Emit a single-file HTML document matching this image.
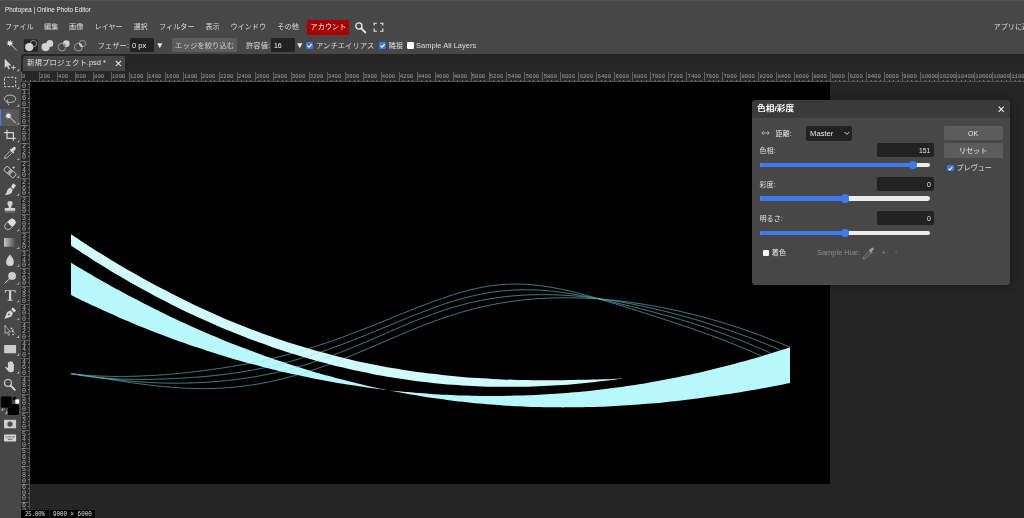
<!DOCTYPE html><html lang="ja"><head><meta charset="utf-8"><title>Photopea | Online Photo Editor</title><style>
html,body{margin:0;padding:0;}
body{width:1024px;height:518px;overflow:hidden;background:#474747;position:relative;font-family:"Liberation Sans", "Noto Sans CJK JP", sans-serif;color:#dcdcdc;font-size:7.1px;line-height:1;}
div,span,i,b,svg{position:absolute;box-sizing:border-box;}
i,b{font-style:normal;font-weight:normal;}
.t{white-space:nowrap;}
.root{left:0;top:0;width:1024px;height:518px;will-change:transform;}
.topline{left:0;top:0;width:1024px;height:1px;background:#525252;}
.title{top:5.9px;font-size:7.6px;color:#f2f2f2;}
.menu{top:23.6px;font-size:7.15px;color:#dcdcdc;}
.acct{left:307px;top:19.6px;width:42.4px;height:15.3px;background:#a80000;border-radius:1.6px;}

.opt{top:42.2px;font-size:7.35px;color:#dcdcdc;}
.inp{background:#222222;border-radius:1.5px;}
.btn{background:#5c5c5c;border-radius:1.5px;}
.cb{width:7.2px;height:7.2px;border-radius:1.2px;}
.cb.on{background:#3b78e8;}
.cb.off{background:#fff;}
.tabbar{left:21px;top:53.6px;width:1003px;height:18px;background:#252525;border-top-left-radius:3px;}
.tab{left:23px;top:55.8px;width:102px;height:15.4px;background:#474747;border-radius:2px 2px 0 0;}
.work{left:21px;top:71px;width:1003px;height:447px;background:#252525;}
.canvas{left:30px;top:82px;width:800px;height:402.3px;background:#000;}
.art{left:0;top:0;}
.hr{left:21px;top:71px;width:1003px;height:11px;background:#272727;overflow:hidden;border-bottom:0.7px solid #505050;}
.hr i.mj{top:1px;width:0.7px;height:10px;background:#5e5e5e;margin-left:-21px;}.hr i.mn{top:9px;width:0.7px;height:1.4px;background:#767676;margin-left:-21px;}
.hr b{top:2.9px;font-family:"Liberation Mono",monospace;font-size:5.6px;color:#a2a2a2;margin-left:-21px;}
.vr{left:21px;top:82px;width:9px;height:436px;background:#272727;overflow:hidden;border-right:0.7px solid #505050;}
.vr i.mj{left:0;width:9px;height:0.7px;background:#5e5e5e;margin-top:-82px;}.vr i.mn{left:7px;width:1.6px;height:0.7px;background:#767676;margin-top:-82px;}
.vr b{left:1.1px;font-family:"Liberation Mono",monospace;font-size:6.7px;color:#acacac;margin-top:-82px;}
.status{top:509.5px;height:8.5px;background:#000;color:#e0e0e0;font-family:"Liberation Mono",monospace;font-size:6.6px;}
.dlg{left:752px;top:99.6px;width:258px;height:185.4px;background:#474747;border-radius:3.5px;box-shadow:0 0.5px 9px 1px rgba(0,0,0,0.32);overflow:hidden;}
.dlg .hd{left:0;top:0;width:258px;height:18.2px;background:#3a3a3a;}

.lab{font-size:7.1px;color:#e0e0e0;}
.num{left:125.3px;width:56.5px;height:14.4px;background:#222222;border-radius:2px;}

.trk{left:8px;width:170.4px;height:4.7px;border-radius:2.4px;background:#ececec;}
.trk i{left:0;top:0;height:4.7px;border-radius:2.4px;background:#3d7af0;}
.knob{width:8.6px;height:8.6px;border-radius:50%;background:#3d7af0;}
</style></head><body><div class="root"><div class="topline"></div><span id="m1" class="t title" style="left:5.00px;transform:scaleX(0.8215);transform-origin:0 50%;">Photopea | Online Photo Editor</span><span id="m2" class="t menu" style="left:5.00px;">ファイル</span><span id="m3" class="t menu" style="left:44.00px;">編集</span><span id="m4" class="t menu" style="left:69.00px;">画像</span><span id="m5" class="t menu" style="left:94.40px;">レイヤー</span><span id="m6" class="t menu" style="left:133.40px;">選択</span><span id="m7" class="t menu" style="left:159.00px;">フィルター</span><span id="m8" class="t menu" style="left:205.40px;">表示</span><span id="m9" class="t menu" style="left:230.40px;">ウインドウ</span><span id="m10" class="t menu" style="left:277.50px;">その他</span><div class="acct"><span id="m11" class="t " style="left:3.60px;top:4.1px;font-size:7.15px;color:#fff;">アカウント</span></div><span id="m12" class="t menu" style="left:993.50px;">アプリに追加</span><svg style="left:354px;top:21px" width="14" height="14" viewBox="0 0 14 14"><circle cx="4.9" cy="5" r="3.1" fill="none" stroke="#e8e8e8" stroke-width="1.3"/><path d="M7.3 7.4L11.3 11.4" stroke="#e8e8e8" stroke-width="1.9" stroke-linecap="round"/></svg><svg style="left:373px;top:22px" width="12" height="11" viewBox="0 0 12 11"><path d="M1.2 3.6V1.2H3.9M7.1 1.2H9.8V3.6M9.8 6.6V9.2H7.1M3.9 9.2H1.2V6.6" fill="none" stroke="#e8e8e8" stroke-width="1.15"/></svg><svg style="left:0;top:34px" width="100" height="22" viewBox="0 34 100 22"><path d="M13.92 44.11L11.14 44.14L12.17 46.72L10.19 44.77L9.09 47.32L9.06 44.54L6.48 45.57L8.43 43.59L5.88 42.49L8.66 42.46L7.63 39.88L9.61 41.83L10.71 39.28L10.74 42.06L13.32 41.03L11.37 43.01Z" fill="#e0e0e0"/><circle cx="9.9" cy="43.3" r="1.9" fill="#e6e6e6"/><path d="M11.3 44.8L16.9 50.5" stroke="#d6d6d6" stroke-width="0.9"/><rect x="23.9" y="39.2" width="14.1" height="12.7" rx="1.4" fill="#252525"/><circle cx="33.4" cy="43.6" r="3.2" fill="none" stroke="#d8d8d8" stroke-width="0.6"/><circle cx="29.2" cy="47.1" r="4.1" fill="#d2d2d2"/><circle cx="49.8" cy="43.6" r="3.5" fill="#d2d2d2"/><circle cx="45.6" cy="47.1" r="4.1" fill="#d2d2d2"/><defs><clipPath id="c3"><circle cx="62" cy="47.1" r="4.1"/></clipPath><clipPath id="c4"><circle cx="78.3" cy="47.1" r="4.1"/></clipPath></defs><circle cx="66.3" cy="43.6" r="3.4" fill="#d2d2d2"/><circle cx="62" cy="47.1" r="4.1" fill="#474747"/><circle cx="66.3" cy="43.6" r="3.1" fill="none" stroke="#d2d2d2" stroke-width="0.55" clip-path="url(#c3)"/><circle cx="62" cy="47.1" r="3.9" fill="none" stroke="#d2d2d2" stroke-width="0.6"/><circle cx="82.5" cy="43.6" r="3.4" fill="#d2d2d2" clip-path="url(#c4)"/><circle cx="82.5" cy="43.6" r="3.2" fill="none" stroke="#d2d2d2" stroke-width="0.6"/><circle cx="78.3" cy="47.1" r="3.9" fill="none" stroke="#d2d2d2" stroke-width="0.6"/></svg><span id="m13" class="t opt" style="left:97.50px;">フェザー:</span><div class="inp" style="left:130.4px;top:38px;width:23.6px;height:13.8px"><span id="m14" class="t " style="left:2.10px;top:4.7px;font-size:7.1px;color:#eee;transform:scaleX(1.0729);transform-origin:0 50%;">0 px</span></div><svg style="left:156.6px;top:43px" width="6" height="6" viewBox="0 0 6 6"><path d="M0.2 0.3H5.4L2.8 5.2Z" fill="#e8e8e8"/></svg><div class="btn" style="left:172.3px;top:38px;width:64.6px;height:14.4px"><span id="m15" class="t " style="left:2.80px;top:3.9px;font-size:7.4px;color:#cfcfcf;">エッジを絞り込む</span></div><span id="m16" class="t opt" style="left:246.00px;">許容値:</span><div class="inp" style="left:271px;top:38px;width:23.8px;height:13.8px"><span id="m17" class="t " style="left:2.50px;top:4.7px;font-size:7.1px;color:#eee;transform:scaleX(0.9822);transform-origin:0 50%;">16</span></div><svg style="left:296.6px;top:43px" width="6" height="6" viewBox="0 0 6 6"><path d="M0.2 0.3H5.4L2.8 5.2Z" fill="#e8e8e8"/></svg><div class="cb on" style="left:306.30px;top:42.10px;width:7.20px;height:7.20px"><svg style="left:0;top:0" width="7.20" height="7.20" viewBox="0 0 10 10"><path d="M2.2 5.2L4.2 7.2L7.9 2.9" fill="none" stroke="#fff" stroke-width="1.5"/></svg></div><span id="m18" class="t opt" style="left:316.00px;">アンチエイリアス</span><div class="cb on" style="left:378.80px;top:42.10px;width:7.20px;height:7.20px"><svg style="left:0;top:0" width="7.20" height="7.20" viewBox="0 0 10 10"><path d="M2.2 5.2L4.2 7.2L7.9 2.9" fill="none" stroke="#fff" stroke-width="1.5"/></svg></div><span id="m19" class="t opt" style="left:388.50px;">隣接</span><div class="cb off" style="left:406.50px;top:42.10px;width:7.20px;height:7.20px"></div><span id="m20" class="t opt" style="left:416.00px;transform:scaleX(1.0250);transform-origin:0 50%;">Sample All Layers</span><div class="tabbar"></div><div class="work"></div><div class="tab"><span id="m21" class="t " style="left:4.00px;top:4.1px;font-size:7.1px;color:#e0e0e0;transform:scaleX(1.0549);transform-origin:0 50%;">新規プロジェクト.psd *</span><svg style="left:91.5px;top:4.6px" width="7" height="7" viewBox="0 0 7 7"><path d="M0.8 0.8L6 6M6 0.8L0.8 6" stroke="#f0f0f0" stroke-width="1.05"/></svg></div><div class="canvas"></div><svg class="art" width="1024" height="518" viewBox="0 0 1024 518"><g fill="none" stroke="#6fc3cb" stroke-width="0.55"><path d="M71.25 373.75C72.92 373.93 77.92 374.50 81.25 374.81C84.58 375.12 87.92 375.37 91.25 375.59C94.58 375.80 97.92 375.97 101.25 376.11C104.58 376.24 107.92 376.33 111.25 376.39C114.58 376.45 117.92 376.46 121.25 376.45C124.58 376.44 127.92 376.40 131.25 376.32C134.58 376.25 137.92 376.14 141.25 376.01C144.58 375.88 147.92 375.72 151.25 375.53C154.58 375.35 157.92 375.13 161.25 374.90C164.58 374.66 167.92 374.40 171.25 374.11C174.58 373.83 177.92 373.52 181.25 373.19C184.58 372.86 187.92 372.51 191.25 372.13C194.58 371.76 197.92 371.36 201.25 370.94C204.58 370.52 207.92 370.08 211.25 369.62C214.58 369.16 217.92 368.67 221.25 368.16C224.58 367.65 227.92 367.12 231.25 366.57C234.58 366.01 237.92 365.43 241.25 364.83C244.58 364.22 247.92 363.59 251.25 362.94C254.58 362.28 257.92 361.59 261.25 360.88C264.58 360.17 267.92 359.42 271.25 358.65C274.58 357.87 277.92 357.07 281.25 356.23C284.58 355.39 287.92 354.52 291.25 353.61C294.58 352.71 297.92 351.77 301.25 350.80C304.58 349.83 307.92 348.82 311.25 347.79C314.58 346.75 317.92 345.68 321.25 344.59C324.58 343.49 327.92 342.36 331.25 341.20C334.58 340.04 337.92 338.86 341.25 337.65C344.58 336.44 347.92 335.20 351.25 333.94C354.58 332.68 357.92 331.40 361.25 330.10C364.58 328.81 367.92 327.49 371.25 326.16C374.58 324.84 377.92 323.50 381.25 322.15C384.58 320.81 387.92 319.45 391.25 318.09C394.58 316.74 397.92 315.38 401.25 314.04C404.58 312.69 407.92 311.34 411.25 310.02C414.58 308.69 417.92 307.37 421.25 306.09C424.58 304.80 427.92 303.52 431.25 302.29C434.58 301.06 437.92 299.85 441.25 298.69C444.58 297.53 447.92 296.40 451.25 295.33C454.58 294.26 457.92 293.24 461.25 292.29C464.58 291.34 467.92 290.44 471.25 289.62C474.58 288.81 477.92 288.06 481.25 287.41C484.58 286.76 487.92 286.19 491.25 285.72C494.58 285.25 497.92 284.87 501.25 284.59C504.58 284.31 507.92 284.13 511.25 284.05C514.58 283.96 517.92 283.98 521.25 284.08C524.58 284.18 527.92 284.38 531.25 284.65C534.58 284.93 537.92 285.29 541.25 285.73C544.58 286.16 547.92 286.68 551.25 287.25C554.58 287.83 557.92 288.48 561.25 289.17C564.58 289.87 567.92 290.63 571.25 291.42C574.58 292.22 577.92 293.07 581.25 293.94C584.58 294.81 587.92 295.73 591.25 296.66C594.58 297.59 597.92 298.56 601.25 299.54C604.58 300.52 607.92 301.53 611.25 302.54C614.58 303.55 617.92 304.59 621.25 305.62C624.58 306.66 627.92 307.71 631.25 308.76C634.58 309.82 637.92 310.88 641.25 311.95C644.58 313.01 647.92 314.09 651.25 315.16C654.58 316.24 657.92 317.32 661.25 318.41C664.58 319.49 667.92 320.58 671.25 321.68C674.58 322.79 677.92 323.89 681.25 325.01C684.58 326.13 687.92 327.26 691.25 328.41C694.58 329.56 697.92 330.72 701.25 331.90C704.58 333.09 707.92 334.28 711.25 335.51C714.58 336.74 717.92 337.98 721.25 339.26C724.58 340.53 727.92 341.83 731.25 343.16C734.58 344.49 737.92 345.85 741.25 347.24C744.58 348.63 747.92 350.05 751.25 351.51C754.58 352.97 759.58 355.25 761.25 356.00"/><path d="M71.25 373.75C72.91 374.04 77.91 374.98 81.24 375.50C84.56 376.02 87.89 376.46 91.22 376.85C94.55 377.25 97.88 377.58 101.21 377.87C104.54 378.15 107.86 378.39 111.19 378.59C114.52 378.78 117.85 378.94 121.18 379.06C124.51 379.18 127.84 379.26 131.16 379.31C134.49 379.37 137.82 379.39 141.15 379.38C144.48 379.38 147.81 379.35 151.14 379.30C154.46 379.24 157.79 379.16 161.12 379.06C164.45 378.96 167.78 378.84 171.11 378.70C174.44 378.55 177.76 378.39 181.09 378.20C184.42 378.02 187.75 377.81 191.08 377.58C194.41 377.35 197.74 377.10 201.06 376.82C204.39 376.54 207.72 376.24 211.05 375.91C214.38 375.58 217.71 375.22 221.04 374.83C224.36 374.44 227.69 374.02 231.02 373.56C234.35 373.10 237.68 372.61 241.01 372.08C244.34 371.55 247.66 370.99 250.99 370.39C254.32 369.78 257.65 369.14 260.98 368.46C264.31 367.78 267.64 367.06 270.96 366.30C274.29 365.54 277.62 364.74 280.95 363.90C284.28 363.07 287.61 362.19 290.94 361.27C294.26 360.35 297.59 359.40 300.92 358.41C304.25 357.41 307.58 356.38 310.91 355.32C314.24 354.25 317.56 353.15 320.89 352.02C324.22 350.89 327.55 349.72 330.88 348.53C334.21 347.33 337.54 346.11 340.86 344.86C344.19 343.61 347.52 342.33 350.85 341.04C354.18 339.74 357.51 338.42 360.84 337.09C364.16 335.76 367.49 334.40 370.82 333.04C374.15 331.68 377.48 330.31 380.81 328.93C384.14 327.56 387.46 326.17 390.79 324.80C394.12 323.42 397.45 322.04 400.78 320.68C404.11 319.31 407.44 317.95 410.76 316.62C414.09 315.28 417.42 313.95 420.75 312.66C424.08 311.37 427.41 310.09 430.74 308.86C434.06 307.63 437.39 306.43 440.72 305.28C444.05 304.13 447.38 303.02 450.71 301.97C454.04 300.92 457.36 299.92 460.69 298.98C464.02 298.05 467.35 297.17 470.68 296.37C474.01 295.56 477.34 294.82 480.66 294.16C483.99 293.49 487.32 292.90 490.65 292.38C493.98 291.86 497.31 291.42 500.64 291.05C503.96 290.68 507.29 290.39 510.62 290.18C513.95 289.96 517.28 289.82 520.61 289.75C523.94 289.69 527.26 289.70 530.59 289.77C533.92 289.85 537.25 290.00 540.58 290.21C543.91 290.42 547.24 290.70 550.56 291.03C553.89 291.36 557.22 291.76 560.55 292.19C563.88 292.63 567.21 293.13 570.54 293.65C573.86 294.18 577.19 294.76 580.52 295.36C583.85 295.96 587.18 296.60 590.51 297.26C593.84 297.92 597.16 298.62 600.49 299.33C603.82 300.04 607.15 300.78 610.48 301.53C613.81 302.28 617.14 303.05 620.46 303.84C623.79 304.62 627.12 305.43 630.45 306.24C633.78 307.06 637.11 307.89 640.44 308.73C643.76 309.57 647.09 310.43 650.42 311.30C653.75 312.17 657.08 313.05 660.41 313.95C663.74 314.86 667.06 315.77 670.39 316.71C673.72 317.65 677.05 318.60 680.38 319.58C683.71 320.57 687.04 321.57 690.36 322.60C693.69 323.63 697.02 324.69 700.35 325.79C703.68 326.88 707.01 328.00 710.34 329.15C713.66 330.30 716.99 331.49 720.32 332.70C723.65 333.92 726.98 335.16 730.31 336.44C733.64 337.71 736.96 339.01 740.29 340.34C743.62 341.66 746.95 343.01 750.28 344.38C753.61 345.75 756.94 347.14 760.26 348.53C763.59 349.93 768.59 352.05 770.25 352.75"/><path d="M71.25 373.75C72.91 373.97 77.90 374.61 81.23 375.06C84.56 375.50 87.89 375.97 91.21 376.41C94.54 376.86 97.87 377.32 101.20 377.75C104.52 378.18 107.85 378.61 111.18 379.01C114.51 379.42 117.83 379.80 121.16 380.16C124.49 380.51 127.82 380.85 131.14 381.15C134.47 381.45 137.80 381.72 141.13 381.96C144.45 382.19 147.78 382.40 151.11 382.57C154.44 382.73 157.76 382.87 161.09 382.97C164.42 383.07 167.75 383.13 171.07 383.16C174.40 383.20 177.73 383.19 181.06 383.16C184.38 383.12 187.71 383.06 191.04 382.95C194.37 382.85 197.69 382.72 201.02 382.55C204.35 382.38 207.68 382.18 211.00 381.94C214.33 381.71 217.66 381.44 220.99 381.13C224.31 380.82 227.64 380.48 230.97 380.10C234.30 379.72 237.62 379.31 240.95 378.86C244.28 378.40 247.61 377.91 250.93 377.38C254.26 376.84 257.59 376.27 260.92 375.65C264.24 375.04 267.57 374.38 270.90 373.67C274.23 372.96 277.55 372.21 280.88 371.42C284.21 370.62 287.54 369.78 290.86 368.89C294.19 368.00 297.52 367.06 300.85 366.08C304.17 365.10 307.50 364.07 310.83 363.00C314.15 361.93 317.48 360.82 320.81 359.66C324.14 358.51 327.46 357.31 330.79 356.08C334.12 354.85 337.45 353.58 340.77 352.28C344.10 350.98 347.43 349.64 350.76 348.29C354.08 346.93 357.41 345.54 360.74 344.14C364.07 342.74 367.39 341.31 370.72 339.88C374.05 338.44 377.38 336.99 380.70 335.55C384.03 334.10 387.36 332.64 390.69 331.20C394.01 329.76 397.34 328.32 400.67 326.90C404.00 325.48 407.32 324.08 410.65 322.71C413.98 321.34 417.31 319.99 420.63 318.68C423.96 317.38 427.29 316.10 430.62 314.88C433.94 313.66 437.27 312.47 440.60 311.35C443.93 310.22 447.25 309.14 450.58 308.12C453.91 307.09 457.24 306.13 460.56 305.22C463.89 304.31 467.22 303.46 470.55 302.67C473.87 301.88 477.20 301.15 480.53 300.49C483.86 299.82 487.18 299.21 490.51 298.67C493.84 298.12 497.17 297.64 500.49 297.21C503.82 296.78 507.15 296.41 510.48 296.09C513.80 295.77 517.13 295.51 520.46 295.29C523.79 295.08 527.11 294.92 530.44 294.81C533.77 294.69 537.10 294.63 540.42 294.61C543.75 294.59 547.08 294.62 550.40 294.69C553.73 294.76 557.06 294.88 560.39 295.04C563.71 295.19 567.04 295.39 570.37 295.62C573.70 295.86 577.02 296.13 580.35 296.45C583.68 296.76 587.01 297.11 590.33 297.49C593.66 297.87 596.99 298.29 600.32 298.74C603.64 299.19 606.97 299.68 610.30 300.19C613.63 300.71 616.95 301.26 620.28 301.84C623.61 302.42 626.94 303.03 630.26 303.66C633.59 304.30 636.92 304.97 640.25 305.66C643.57 306.36 646.90 307.08 650.23 307.83C653.56 308.58 656.88 309.35 660.21 310.16C663.54 310.96 666.87 311.79 670.19 312.64C673.52 313.49 676.85 314.37 680.18 315.28C683.50 316.18 686.83 317.11 690.16 318.06C693.49 319.01 696.81 319.99 700.14 320.99C703.47 321.99 706.80 323.02 710.12 324.07C713.45 325.12 716.78 326.19 720.11 327.29C723.43 328.39 726.76 329.51 730.09 330.66C733.42 331.81 736.74 332.98 740.07 334.17C743.40 335.37 746.73 336.59 750.05 337.84C753.38 339.08 756.71 340.35 760.04 341.65C763.36 342.95 766.69 344.27 770.02 345.62C773.35 346.97 778.34 349.06 780.00 349.75"/><path d="M71.25 373.75C72.91 373.97 77.91 374.60 81.23 375.05C84.56 375.51 87.89 376.00 91.22 376.49C94.54 376.98 97.87 377.49 101.20 378.01C104.53 378.52 107.85 379.04 111.18 379.56C114.51 380.08 117.84 380.60 121.16 381.10C124.49 381.61 127.82 382.11 131.15 382.59C134.47 383.07 137.80 383.54 141.13 383.99C144.46 384.43 147.78 384.86 151.11 385.26C154.44 385.65 157.77 386.03 161.09 386.37C164.42 386.70 167.75 387.01 171.08 387.28C174.40 387.55 177.73 387.79 181.06 387.98C184.39 388.17 187.71 388.33 191.04 388.44C194.37 388.55 197.70 388.61 201.02 388.63C204.35 388.65 207.68 388.62 211.01 388.54C214.33 388.47 217.66 388.34 220.99 388.16C224.32 387.98 227.64 387.75 230.97 387.47C234.30 387.19 237.63 386.85 240.95 386.46C244.28 386.07 247.61 385.63 250.94 385.14C254.27 384.64 257.59 384.09 260.92 383.49C264.25 382.89 267.58 382.23 270.90 381.52C274.23 380.81 277.56 380.05 280.89 379.24C284.21 378.43 287.54 377.57 290.87 376.66C294.20 375.75 297.52 374.79 300.85 373.79C304.18 372.79 307.51 371.74 310.83 370.65C314.16 369.56 317.49 368.42 320.82 367.25C324.14 366.08 327.47 364.87 330.80 363.63C334.13 362.39 337.45 361.11 340.78 359.81C344.11 358.50 347.44 357.17 350.76 355.81C354.09 354.46 357.42 353.08 360.75 351.68C364.07 350.29 367.40 348.87 370.73 347.46C374.06 346.04 377.38 344.60 380.71 343.17C384.04 341.74 387.37 340.30 390.69 338.88C394.02 337.45 397.35 336.03 400.68 334.62C404.00 333.22 407.33 331.82 410.66 330.46C413.99 329.09 417.31 327.74 420.64 326.43C423.97 325.12 427.30 323.83 430.62 322.59C433.95 321.34 437.28 320.13 440.61 318.97C443.94 317.80 447.26 316.67 450.59 315.59C453.92 314.52 457.25 313.48 460.57 312.50C463.90 311.52 467.23 310.58 470.56 309.70C473.88 308.81 477.21 307.98 480.54 307.20C483.87 306.42 487.19 305.69 490.52 305.01C493.85 304.33 497.18 303.71 500.50 303.13C503.83 302.55 507.16 302.03 510.49 301.55C513.81 301.07 517.14 300.64 520.47 300.26C523.80 299.88 527.12 299.54 530.45 299.25C533.78 298.95 537.11 298.71 540.43 298.50C543.76 298.29 547.09 298.13 550.42 298.01C553.74 297.89 557.07 297.81 560.40 297.77C563.73 297.72 567.05 297.72 570.38 297.76C573.71 297.79 577.04 297.87 580.36 297.98C583.69 298.09 587.02 298.24 590.35 298.42C593.67 298.61 597.00 298.83 600.33 299.08C603.66 299.33 606.98 299.62 610.31 299.94C613.64 300.26 616.97 300.62 620.30 301.01C623.62 301.40 626.95 301.82 630.28 302.27C633.61 302.72 636.93 303.21 640.26 303.72C643.59 304.24 646.92 304.78 650.24 305.36C653.57 305.94 656.90 306.55 660.23 307.18C663.55 307.82 666.88 308.49 670.21 309.19C673.54 309.89 676.86 310.62 680.19 311.37C683.52 312.13 686.85 312.92 690.17 313.74C693.50 314.55 696.83 315.40 700.16 316.27C703.48 317.15 706.81 318.06 710.14 318.99C713.47 319.92 716.79 320.89 720.12 321.88C723.45 322.88 726.78 323.90 730.10 324.95C733.43 326.01 736.76 327.09 740.09 328.20C743.41 329.32 746.74 330.46 750.07 331.63C753.40 332.81 756.72 334.01 760.05 335.25C763.38 336.49 766.71 337.76 770.03 339.06C773.36 340.36 776.69 341.69 780.02 343.05C783.34 344.42 788.34 346.55 790.00 347.25"/></g><path d="M71.00 262.75C72.33 263.55 76.33 265.97 79.00 267.56C81.67 269.14 84.33 270.72 87.00 272.28C89.67 273.84 92.33 275.38 95.00 276.92C97.67 278.45 100.33 279.97 103.00 281.47C105.67 282.98 108.33 284.47 111.00 285.95C113.67 287.42 116.33 288.89 119.00 290.34C121.67 291.79 124.33 293.22 127.00 294.65C129.67 296.07 132.33 297.48 135.00 298.87C137.67 300.27 140.33 301.65 143.00 303.02C145.67 304.38 148.33 305.74 151.00 307.08C153.67 308.42 156.33 309.74 159.00 311.06C161.67 312.37 164.33 313.67 167.00 314.95C169.67 316.24 172.33 317.51 175.00 318.76C177.67 320.02 180.33 321.26 183.00 322.49C185.67 323.72 188.33 324.94 191.00 326.14C193.67 327.34 196.33 328.53 199.00 329.70C201.67 330.88 204.33 332.04 207.00 333.19C209.67 334.33 212.33 335.47 215.00 336.59C217.67 337.70 220.33 338.81 223.00 339.90C225.67 340.99 228.33 342.07 231.00 343.14C233.67 344.20 236.33 345.25 239.00 346.29C241.67 347.32 244.33 348.35 247.00 349.36C249.67 350.37 252.33 351.36 255.00 352.34C257.67 353.33 260.33 354.29 263.00 355.25C265.67 356.20 268.33 357.14 271.00 358.07C273.67 359.00 276.33 359.91 279.00 360.81C281.67 361.71 284.33 362.60 287.00 363.47C289.67 364.35 292.33 365.20 295.00 366.05C297.67 366.90 300.33 367.73 303.00 368.55C305.67 369.37 308.33 370.17 311.00 370.96C313.67 371.76 316.33 372.53 319.00 373.30C321.67 374.06 324.33 374.82 327.00 375.55C329.67 376.29 332.33 377.02 335.00 377.73C337.67 378.44 340.33 379.14 343.00 379.82C345.67 380.51 348.33 381.18 351.00 381.84C353.67 382.49 356.33 383.14 359.00 383.77C361.67 384.40 364.33 385.02 367.00 385.63C369.67 386.23 372.33 386.82 375.00 387.40C377.67 387.98 381.12 388.71 383.00 389.10C384.88 389.50 384.92 389.55 386.25 389.77C387.58 389.98 388.88 390.15 391.00 390.39C393.12 390.64 396.33 390.97 399.00 391.24C401.67 391.51 404.33 391.78 407.00 392.02C409.67 392.27 412.33 392.51 415.00 392.73C417.67 392.96 420.33 393.17 423.00 393.37C425.67 393.57 428.33 393.76 431.00 393.94C433.67 394.12 436.33 394.28 439.00 394.44C441.67 394.59 444.33 394.74 447.00 394.87C449.67 395.00 452.33 395.12 455.00 395.23C457.67 395.33 460.33 395.43 463.00 395.51C465.67 395.60 468.33 395.67 471.00 395.73C473.67 395.79 476.33 395.84 479.00 395.88C481.67 395.92 484.33 395.94 487.00 395.96C489.67 395.97 492.33 395.98 495.00 395.97C497.67 395.96 500.33 395.94 503.00 395.91C505.67 395.88 508.33 395.83 511.00 395.78C513.67 395.72 516.33 395.66 519.00 395.58C521.67 395.50 524.33 395.41 527.00 395.31C529.67 395.21 532.33 395.10 535.00 394.97C537.67 394.85 540.33 394.71 543.00 394.56C545.67 394.42 548.33 394.26 551.00 394.09C553.67 393.92 556.33 393.73 559.00 393.54C561.67 393.35 564.33 393.14 567.00 392.92C569.67 392.71 572.33 392.48 575.00 392.24C577.67 392.00 580.33 391.75 583.00 391.48C585.67 391.22 588.33 390.94 591.00 390.66C593.67 390.37 596.33 390.07 599.00 389.76C601.67 389.45 604.33 389.13 607.00 388.80C609.67 388.46 612.33 388.12 615.00 387.76C617.67 387.40 620.33 387.03 623.00 386.65C625.67 386.27 628.33 385.88 631.00 385.48C633.67 385.07 636.33 384.66 639.00 384.23C641.67 383.81 644.33 383.37 647.00 382.92C649.67 382.46 652.33 382.00 655.00 381.53C657.67 381.05 660.33 380.57 663.00 380.07C665.67 379.57 668.33 379.06 671.00 378.54C673.67 378.02 676.33 377.48 679.00 376.94C681.67 376.39 684.33 375.84 687.00 375.27C689.67 374.70 692.33 374.12 695.00 373.52C697.67 372.93 700.33 372.32 703.00 371.71C705.67 371.09 708.33 370.46 711.00 369.82C713.67 369.18 716.33 368.52 719.00 367.86C721.67 367.19 724.33 366.52 727.00 365.83C729.67 365.14 732.33 364.43 735.00 363.72C737.67 363.01 740.33 362.28 743.00 361.54C745.67 360.80 748.33 360.05 751.00 359.29C753.67 358.53 756.33 357.75 759.00 356.96C761.67 356.18 764.33 355.38 767.00 354.56C769.67 353.75 772.33 352.93 775.00 352.09C777.67 351.25 780.50 350.35 783.00 349.54C785.50 348.73 788.83 347.63 790.00 347.25L790.00 383.00C788.83 383.23 785.50 383.91 783.00 384.40C780.50 384.89 777.67 385.44 775.00 385.95C772.33 386.46 769.67 386.97 767.00 387.46C764.33 387.96 761.67 388.44 759.00 388.92C756.33 389.40 753.67 389.87 751.00 390.33C748.33 390.79 745.67 391.25 743.00 391.69C740.33 392.14 737.67 392.57 735.00 393.00C732.33 393.43 729.67 393.85 727.00 394.26C724.33 394.67 721.67 395.08 719.00 395.47C716.33 395.86 713.67 396.25 711.00 396.62C708.33 397.00 705.67 397.36 703.00 397.72C700.33 398.08 697.67 398.43 695.00 398.77C692.33 399.11 689.67 399.44 687.00 399.76C684.33 400.08 681.67 400.39 679.00 400.69C676.33 400.99 673.67 401.28 671.00 401.56C668.33 401.84 665.67 402.12 663.00 402.38C660.33 402.64 657.67 402.89 655.00 403.14C652.33 403.38 649.67 403.61 647.00 403.83C644.33 404.06 641.67 404.27 639.00 404.47C636.33 404.67 633.67 404.87 631.00 405.05C628.33 405.23 625.67 405.40 623.00 405.56C620.33 405.72 617.67 405.87 615.00 406.01C612.33 406.15 609.67 406.28 607.00 406.40C604.33 406.52 601.67 406.63 599.00 406.73C596.33 406.82 593.67 406.91 591.00 406.99C588.33 407.06 585.67 407.13 583.00 407.18C580.33 407.24 577.67 407.28 575.00 407.31C572.33 407.34 569.67 407.36 567.00 407.37C564.33 407.38 561.67 407.38 559.00 407.37C556.33 407.35 553.67 407.33 551.00 407.29C548.33 407.26 545.67 407.21 543.00 407.15C540.33 407.09 537.67 407.02 535.00 406.94C532.33 406.86 529.67 406.76 527.00 406.66C524.33 406.55 521.67 406.44 519.00 406.31C516.33 406.18 513.67 406.04 511.00 405.88C508.33 405.73 505.67 405.57 503.00 405.39C500.33 405.22 497.67 405.03 495.00 404.83C492.33 404.63 489.67 404.41 487.00 404.19C484.33 403.96 481.67 403.73 479.00 403.48C476.33 403.23 473.67 402.97 471.00 402.69C468.33 402.42 465.67 402.14 463.00 401.84C460.33 401.54 457.67 401.23 455.00 400.90C452.33 400.58 449.67 400.25 447.00 399.90C444.33 399.55 441.67 399.19 439.00 398.82C436.33 398.44 433.67 398.06 431.00 397.66C428.33 397.26 425.67 396.85 423.00 396.42C420.33 396.00 417.67 395.56 415.00 395.11C412.33 394.67 409.67 394.20 407.00 393.73C404.33 393.25 401.67 392.76 399.00 392.26C396.33 391.76 393.12 391.12 391.00 390.72C388.88 390.32 387.58 390.06 386.25 389.85C384.92 389.64 384.88 389.70 383.00 389.47C381.12 389.24 377.67 388.82 375.00 388.48C372.33 388.13 369.67 387.78 367.00 387.41C364.33 387.04 361.67 386.67 359.00 386.28C356.33 385.88 353.67 385.48 351.00 385.07C348.33 384.65 345.67 384.23 343.00 383.79C340.33 383.35 337.67 382.90 335.00 382.43C332.33 381.97 329.67 381.50 327.00 381.01C324.33 380.52 321.67 380.02 319.00 379.51C316.33 379.00 313.67 378.48 311.00 377.94C308.33 377.40 305.67 376.86 303.00 376.29C300.33 375.73 297.67 375.16 295.00 374.58C292.33 373.99 289.67 373.39 287.00 372.78C284.33 372.17 281.67 371.55 279.00 370.92C276.33 370.28 273.67 369.64 271.00 368.98C268.33 368.32 265.67 367.64 263.00 366.96C260.33 366.27 257.67 365.58 255.00 364.87C252.33 364.16 249.67 363.44 247.00 362.70C244.33 361.97 241.67 361.22 239.00 360.46C236.33 359.70 233.67 358.92 231.00 358.14C228.33 357.35 225.67 356.55 223.00 355.74C220.33 354.93 217.67 354.10 215.00 353.27C212.33 352.43 209.67 351.58 207.00 350.71C204.33 349.85 201.67 348.97 199.00 348.09C196.33 347.20 193.67 346.29 191.00 345.38C188.33 344.46 185.67 343.53 183.00 342.59C180.33 341.65 177.67 340.69 175.00 339.72C172.33 338.75 169.67 337.77 167.00 336.78C164.33 335.78 161.67 334.77 159.00 333.75C156.33 332.73 153.67 331.69 151.00 330.64C148.33 329.59 145.67 328.53 143.00 327.45C140.33 326.38 137.67 325.29 135.00 324.18C132.33 323.08 129.67 321.96 127.00 320.83C124.33 319.70 121.67 318.55 119.00 317.39C116.33 316.23 113.67 315.06 111.00 313.87C108.33 312.69 105.67 311.48 103.00 310.27C100.33 309.05 97.67 307.82 95.00 306.58C92.33 305.34 89.67 304.08 87.00 302.81C84.33 301.53 81.67 300.25 79.00 298.95C76.33 297.65 72.33 295.66 71.00 295.00Z" fill="#b8f8fd"/><path d="M71.00 234.25C72.67 235.36 77.69 238.71 81.04 240.90C84.38 243.09 87.73 245.25 91.08 247.39C94.42 249.53 97.77 251.64 101.11 253.72C104.46 255.81 107.81 257.86 111.15 259.89C114.50 261.93 117.84 263.93 121.19 265.91C124.54 267.89 127.88 269.84 131.23 271.76C134.58 273.68 137.92 275.58 141.27 277.45C144.61 279.32 147.96 281.17 151.31 282.98C154.65 284.80 158.00 286.59 161.34 288.35C164.69 290.11 168.04 291.85 171.38 293.56C174.73 295.26 178.07 296.95 181.42 298.60C184.77 300.25 188.11 301.88 191.46 303.48C194.80 305.08 198.15 306.66 201.50 308.20C204.84 309.75 208.19 311.27 211.53 312.76C214.88 314.25 218.23 315.72 221.57 317.16C224.92 318.59 228.26 320.01 231.61 321.39C234.96 322.78 238.30 324.13 241.65 325.47C245.00 326.80 248.34 328.10 251.69 329.38C255.03 330.66 258.38 331.91 261.73 333.13C265.07 334.36 268.42 335.56 271.76 336.73C275.11 337.90 278.46 339.05 281.80 340.17C285.15 341.29 288.49 342.38 291.84 343.45C295.19 344.52 298.53 345.56 301.88 346.58C305.22 347.59 308.57 348.59 311.92 349.55C315.26 350.52 318.61 351.46 321.95 352.37C325.30 353.29 328.65 354.17 331.99 355.04C335.34 355.90 338.68 356.74 342.03 357.56C345.38 358.37 348.72 359.16 352.07 359.93C355.42 360.70 358.76 361.44 362.11 362.15C365.45 362.87 368.80 363.57 372.15 364.24C375.49 364.91 378.84 365.55 382.18 366.17C385.53 366.80 388.88 367.40 392.22 367.97C395.57 368.55 398.91 369.11 402.26 369.64C405.61 370.17 408.95 370.68 412.30 371.16C415.64 371.65 418.99 372.12 422.34 372.56C425.68 373.01 429.03 373.43 432.37 373.83C435.72 374.23 439.07 374.61 442.41 374.97C445.76 375.33 449.10 375.67 452.45 375.99C455.80 376.31 459.14 376.61 462.49 376.89C465.84 377.17 469.18 377.43 472.53 377.68C475.87 377.92 479.22 378.15 482.57 378.35C485.91 378.56 489.26 378.75 492.60 378.92C495.95 379.09 499.30 379.24 502.64 379.38C505.99 379.52 509.33 379.64 512.68 379.74C516.03 379.85 519.37 379.94 522.72 380.01C526.06 380.08 529.41 380.14 532.76 380.19C536.10 380.23 539.45 380.26 542.79 380.28C546.14 380.29 549.49 380.30 552.83 380.29C556.18 380.28 559.52 380.25 562.87 380.22C566.22 380.18 569.56 380.14 572.91 380.08C576.26 380.02 579.60 379.95 582.95 379.87C586.29 379.79 589.64 379.71 592.99 379.61C596.33 379.51 599.68 379.40 603.02 379.29C606.37 379.17 609.72 379.04 613.06 378.91C616.41 378.78 621.43 378.57 623.10 378.50L623.10 378.50C621.43 378.73 616.41 379.42 613.06 379.85C609.72 380.29 606.37 380.70 603.02 381.10C599.68 381.49 596.33 381.87 592.99 382.23C589.64 382.58 586.29 382.92 582.95 383.24C579.60 383.56 576.26 383.85 572.91 384.13C569.56 384.41 566.22 384.67 562.87 384.90C559.52 385.14 556.18 385.35 552.83 385.55C549.49 385.74 546.14 385.91 542.79 386.07C539.45 386.22 536.10 386.35 532.76 386.46C529.41 386.57 526.06 386.65 522.72 386.72C519.37 386.78 516.03 386.82 512.68 386.84C509.33 386.86 505.99 386.86 502.64 386.84C499.30 386.81 495.95 386.77 492.60 386.70C489.26 386.62 485.91 386.53 482.57 386.41C479.22 386.30 475.87 386.16 472.53 386.00C469.18 385.83 465.84 385.65 462.49 385.44C459.14 385.22 455.80 384.99 452.45 384.73C449.10 384.48 445.76 384.19 442.41 383.89C439.07 383.58 435.72 383.25 432.37 382.90C429.03 382.55 425.68 382.17 422.34 381.76C418.99 381.36 415.64 380.94 412.30 380.48C408.95 380.03 405.61 379.56 402.26 379.06C398.91 378.56 395.57 378.03 392.22 377.48C388.88 376.93 385.53 376.36 382.18 375.76C378.84 375.16 375.49 374.54 372.15 373.89C368.80 373.24 365.45 372.56 362.11 371.86C358.76 371.17 355.42 370.44 352.07 369.69C348.72 368.95 345.38 368.17 342.03 367.37C338.68 366.57 335.34 365.75 331.99 364.90C328.65 364.05 325.30 363.18 321.95 362.28C318.61 361.38 315.26 360.46 311.92 359.51C308.57 358.56 305.22 357.58 301.88 356.58C298.53 355.58 295.19 354.56 291.84 353.51C288.49 352.45 285.15 351.38 281.80 350.28C278.46 349.17 275.11 348.05 271.76 346.89C268.42 345.74 265.07 344.56 261.73 343.36C258.38 342.15 255.03 340.92 251.69 339.66C248.34 338.41 245.00 337.12 241.65 335.81C238.30 334.51 234.96 333.17 231.61 331.81C228.26 330.45 224.92 329.06 221.57 327.65C218.23 326.23 214.88 324.79 211.53 323.33C208.19 321.86 204.84 320.37 201.50 318.85C198.15 317.32 194.80 315.78 191.46 314.20C188.11 312.63 184.77 311.03 181.42 309.40C178.07 307.77 174.73 306.12 171.38 304.43C168.04 302.75 164.69 301.04 161.34 299.30C158.00 297.57 154.65 295.80 151.31 294.01C147.96 292.21 144.61 290.39 141.27 288.54C137.92 286.69 134.58 284.82 131.23 282.91C127.88 281.01 124.54 279.07 121.19 277.11C117.84 275.15 114.50 273.16 111.15 271.14C107.81 269.12 104.46 267.07 101.11 264.99C97.77 262.91 94.42 260.81 91.08 258.67C87.73 256.54 84.38 254.37 81.04 252.18C77.69 249.98 72.67 246.61 71.00 245.50Z" fill="#d1fafd"/><g fill="none" stroke="#4aa0aa" stroke-width="0.5" stroke-opacity="0.3"><path d="M71.25 373.75C72.92 373.93 77.92 374.50 81.25 374.81C84.58 375.12 87.92 375.37 91.25 375.59C94.58 375.80 97.92 375.97 101.25 376.11C104.58 376.24 107.92 376.33 111.25 376.39C114.58 376.45 117.92 376.46 121.25 376.45C124.58 376.44 127.92 376.40 131.25 376.32C134.58 376.25 137.92 376.14 141.25 376.01C144.58 375.88 147.92 375.72 151.25 375.53C154.58 375.35 157.92 375.13 161.25 374.90C164.58 374.66 167.92 374.40 171.25 374.11C174.58 373.83 177.92 373.52 181.25 373.19C184.58 372.86 187.92 372.51 191.25 372.13C194.58 371.76 197.92 371.36 201.25 370.94C204.58 370.52 207.92 370.08 211.25 369.62C214.58 369.16 217.92 368.67 221.25 368.16C224.58 367.65 227.92 367.12 231.25 366.57C234.58 366.01 237.92 365.43 241.25 364.83C244.58 364.22 247.92 363.59 251.25 362.94C254.58 362.28 257.92 361.59 261.25 360.88C264.58 360.17 267.92 359.42 271.25 358.65C274.58 357.87 277.92 357.07 281.25 356.23C284.58 355.39 287.92 354.52 291.25 353.61C294.58 352.71 297.92 351.77 301.25 350.80C304.58 349.83 307.92 348.82 311.25 347.79C314.58 346.75 317.92 345.68 321.25 344.59C324.58 343.49 327.92 342.36 331.25 341.20C334.58 340.04 337.92 338.86 341.25 337.65C344.58 336.44 347.92 335.20 351.25 333.94C354.58 332.68 357.92 331.40 361.25 330.10C364.58 328.81 367.92 327.49 371.25 326.16C374.58 324.84 377.92 323.50 381.25 322.15C384.58 320.81 387.92 319.45 391.25 318.09C394.58 316.74 397.92 315.38 401.25 314.04C404.58 312.69 407.92 311.34 411.25 310.02C414.58 308.69 417.92 307.37 421.25 306.09C424.58 304.80 427.92 303.52 431.25 302.29C434.58 301.06 437.92 299.85 441.25 298.69C444.58 297.53 447.92 296.40 451.25 295.33C454.58 294.26 457.92 293.24 461.25 292.29C464.58 291.34 467.92 290.44 471.25 289.62C474.58 288.81 477.92 288.06 481.25 287.41C484.58 286.76 487.92 286.19 491.25 285.72C494.58 285.25 497.92 284.87 501.25 284.59C504.58 284.31 507.92 284.13 511.25 284.05C514.58 283.96 517.92 283.98 521.25 284.08C524.58 284.18 527.92 284.38 531.25 284.65C534.58 284.93 537.92 285.29 541.25 285.73C544.58 286.16 547.92 286.68 551.25 287.25C554.58 287.83 557.92 288.48 561.25 289.17C564.58 289.87 567.92 290.63 571.25 291.42C574.58 292.22 577.92 293.07 581.25 293.94C584.58 294.81 587.92 295.73 591.25 296.66C594.58 297.59 597.92 298.56 601.25 299.54C604.58 300.52 607.92 301.53 611.25 302.54C614.58 303.55 617.92 304.59 621.25 305.62C624.58 306.66 627.92 307.71 631.25 308.76C634.58 309.82 637.92 310.88 641.25 311.95C644.58 313.01 647.92 314.09 651.25 315.16C654.58 316.24 657.92 317.32 661.25 318.41C664.58 319.49 667.92 320.58 671.25 321.68C674.58 322.79 677.92 323.89 681.25 325.01C684.58 326.13 687.92 327.26 691.25 328.41C694.58 329.56 697.92 330.72 701.25 331.90C704.58 333.09 707.92 334.28 711.25 335.51C714.58 336.74 717.92 337.98 721.25 339.26C724.58 340.53 727.92 341.83 731.25 343.16C734.58 344.49 737.92 345.85 741.25 347.24C744.58 348.63 747.92 350.05 751.25 351.51C754.58 352.97 759.58 355.25 761.25 356.00"/><path d="M71.25 373.75C72.91 374.04 77.91 374.98 81.24 375.50C84.56 376.02 87.89 376.46 91.22 376.85C94.55 377.25 97.88 377.58 101.21 377.87C104.54 378.15 107.86 378.39 111.19 378.59C114.52 378.78 117.85 378.94 121.18 379.06C124.51 379.18 127.84 379.26 131.16 379.31C134.49 379.37 137.82 379.39 141.15 379.38C144.48 379.38 147.81 379.35 151.14 379.30C154.46 379.24 157.79 379.16 161.12 379.06C164.45 378.96 167.78 378.84 171.11 378.70C174.44 378.55 177.76 378.39 181.09 378.20C184.42 378.02 187.75 377.81 191.08 377.58C194.41 377.35 197.74 377.10 201.06 376.82C204.39 376.54 207.72 376.24 211.05 375.91C214.38 375.58 217.71 375.22 221.04 374.83C224.36 374.44 227.69 374.02 231.02 373.56C234.35 373.10 237.68 372.61 241.01 372.08C244.34 371.55 247.66 370.99 250.99 370.39C254.32 369.78 257.65 369.14 260.98 368.46C264.31 367.78 267.64 367.06 270.96 366.30C274.29 365.54 277.62 364.74 280.95 363.90C284.28 363.07 287.61 362.19 290.94 361.27C294.26 360.35 297.59 359.40 300.92 358.41C304.25 357.41 307.58 356.38 310.91 355.32C314.24 354.25 317.56 353.15 320.89 352.02C324.22 350.89 327.55 349.72 330.88 348.53C334.21 347.33 337.54 346.11 340.86 344.86C344.19 343.61 347.52 342.33 350.85 341.04C354.18 339.74 357.51 338.42 360.84 337.09C364.16 335.76 367.49 334.40 370.82 333.04C374.15 331.68 377.48 330.31 380.81 328.93C384.14 327.56 387.46 326.17 390.79 324.80C394.12 323.42 397.45 322.04 400.78 320.68C404.11 319.31 407.44 317.95 410.76 316.62C414.09 315.28 417.42 313.95 420.75 312.66C424.08 311.37 427.41 310.09 430.74 308.86C434.06 307.63 437.39 306.43 440.72 305.28C444.05 304.13 447.38 303.02 450.71 301.97C454.04 300.92 457.36 299.92 460.69 298.98C464.02 298.05 467.35 297.17 470.68 296.37C474.01 295.56 477.34 294.82 480.66 294.16C483.99 293.49 487.32 292.90 490.65 292.38C493.98 291.86 497.31 291.42 500.64 291.05C503.96 290.68 507.29 290.39 510.62 290.18C513.95 289.96 517.28 289.82 520.61 289.75C523.94 289.69 527.26 289.70 530.59 289.77C533.92 289.85 537.25 290.00 540.58 290.21C543.91 290.42 547.24 290.70 550.56 291.03C553.89 291.36 557.22 291.76 560.55 292.19C563.88 292.63 567.21 293.13 570.54 293.65C573.86 294.18 577.19 294.76 580.52 295.36C583.85 295.96 587.18 296.60 590.51 297.26C593.84 297.92 597.16 298.62 600.49 299.33C603.82 300.04 607.15 300.78 610.48 301.53C613.81 302.28 617.14 303.05 620.46 303.84C623.79 304.62 627.12 305.43 630.45 306.24C633.78 307.06 637.11 307.89 640.44 308.73C643.76 309.57 647.09 310.43 650.42 311.30C653.75 312.17 657.08 313.05 660.41 313.95C663.74 314.86 667.06 315.77 670.39 316.71C673.72 317.65 677.05 318.60 680.38 319.58C683.71 320.57 687.04 321.57 690.36 322.60C693.69 323.63 697.02 324.69 700.35 325.79C703.68 326.88 707.01 328.00 710.34 329.15C713.66 330.30 716.99 331.49 720.32 332.70C723.65 333.92 726.98 335.16 730.31 336.44C733.64 337.71 736.96 339.01 740.29 340.34C743.62 341.66 746.95 343.01 750.28 344.38C753.61 345.75 756.94 347.14 760.26 348.53C763.59 349.93 768.59 352.05 770.25 352.75"/><path d="M71.25 373.75C72.91 373.97 77.90 374.61 81.23 375.06C84.56 375.50 87.89 375.97 91.21 376.41C94.54 376.86 97.87 377.32 101.20 377.75C104.52 378.18 107.85 378.61 111.18 379.01C114.51 379.42 117.83 379.80 121.16 380.16C124.49 380.51 127.82 380.85 131.14 381.15C134.47 381.45 137.80 381.72 141.13 381.96C144.45 382.19 147.78 382.40 151.11 382.57C154.44 382.73 157.76 382.87 161.09 382.97C164.42 383.07 167.75 383.13 171.07 383.16C174.40 383.20 177.73 383.19 181.06 383.16C184.38 383.12 187.71 383.06 191.04 382.95C194.37 382.85 197.69 382.72 201.02 382.55C204.35 382.38 207.68 382.18 211.00 381.94C214.33 381.71 217.66 381.44 220.99 381.13C224.31 380.82 227.64 380.48 230.97 380.10C234.30 379.72 237.62 379.31 240.95 378.86C244.28 378.40 247.61 377.91 250.93 377.38C254.26 376.84 257.59 376.27 260.92 375.65C264.24 375.04 267.57 374.38 270.90 373.67C274.23 372.96 277.55 372.21 280.88 371.42C284.21 370.62 287.54 369.78 290.86 368.89C294.19 368.00 297.52 367.06 300.85 366.08C304.17 365.10 307.50 364.07 310.83 363.00C314.15 361.93 317.48 360.82 320.81 359.66C324.14 358.51 327.46 357.31 330.79 356.08C334.12 354.85 337.45 353.58 340.77 352.28C344.10 350.98 347.43 349.64 350.76 348.29C354.08 346.93 357.41 345.54 360.74 344.14C364.07 342.74 367.39 341.31 370.72 339.88C374.05 338.44 377.38 336.99 380.70 335.55C384.03 334.10 387.36 332.64 390.69 331.20C394.01 329.76 397.34 328.32 400.67 326.90C404.00 325.48 407.32 324.08 410.65 322.71C413.98 321.34 417.31 319.99 420.63 318.68C423.96 317.38 427.29 316.10 430.62 314.88C433.94 313.66 437.27 312.47 440.60 311.35C443.93 310.22 447.25 309.14 450.58 308.12C453.91 307.09 457.24 306.13 460.56 305.22C463.89 304.31 467.22 303.46 470.55 302.67C473.87 301.88 477.20 301.15 480.53 300.49C483.86 299.82 487.18 299.21 490.51 298.67C493.84 298.12 497.17 297.64 500.49 297.21C503.82 296.78 507.15 296.41 510.48 296.09C513.80 295.77 517.13 295.51 520.46 295.29C523.79 295.08 527.11 294.92 530.44 294.81C533.77 294.69 537.10 294.63 540.42 294.61C543.75 294.59 547.08 294.62 550.40 294.69C553.73 294.76 557.06 294.88 560.39 295.04C563.71 295.19 567.04 295.39 570.37 295.62C573.70 295.86 577.02 296.13 580.35 296.45C583.68 296.76 587.01 297.11 590.33 297.49C593.66 297.87 596.99 298.29 600.32 298.74C603.64 299.19 606.97 299.68 610.30 300.19C613.63 300.71 616.95 301.26 620.28 301.84C623.61 302.42 626.94 303.03 630.26 303.66C633.59 304.30 636.92 304.97 640.25 305.66C643.57 306.36 646.90 307.08 650.23 307.83C653.56 308.58 656.88 309.35 660.21 310.16C663.54 310.96 666.87 311.79 670.19 312.64C673.52 313.49 676.85 314.37 680.18 315.28C683.50 316.18 686.83 317.11 690.16 318.06C693.49 319.01 696.81 319.99 700.14 320.99C703.47 321.99 706.80 323.02 710.12 324.07C713.45 325.12 716.78 326.19 720.11 327.29C723.43 328.39 726.76 329.51 730.09 330.66C733.42 331.81 736.74 332.98 740.07 334.17C743.40 335.37 746.73 336.59 750.05 337.84C753.38 339.08 756.71 340.35 760.04 341.65C763.36 342.95 766.69 344.27 770.02 345.62C773.35 346.97 778.34 349.06 780.00 349.75"/><path d="M71.25 373.75C72.91 373.97 77.91 374.60 81.23 375.05C84.56 375.51 87.89 376.00 91.22 376.49C94.54 376.98 97.87 377.49 101.20 378.01C104.53 378.52 107.85 379.04 111.18 379.56C114.51 380.08 117.84 380.60 121.16 381.10C124.49 381.61 127.82 382.11 131.15 382.59C134.47 383.07 137.80 383.54 141.13 383.99C144.46 384.43 147.78 384.86 151.11 385.26C154.44 385.65 157.77 386.03 161.09 386.37C164.42 386.70 167.75 387.01 171.08 387.28C174.40 387.55 177.73 387.79 181.06 387.98C184.39 388.17 187.71 388.33 191.04 388.44C194.37 388.55 197.70 388.61 201.02 388.63C204.35 388.65 207.68 388.62 211.01 388.54C214.33 388.47 217.66 388.34 220.99 388.16C224.32 387.98 227.64 387.75 230.97 387.47C234.30 387.19 237.63 386.85 240.95 386.46C244.28 386.07 247.61 385.63 250.94 385.14C254.27 384.64 257.59 384.09 260.92 383.49C264.25 382.89 267.58 382.23 270.90 381.52C274.23 380.81 277.56 380.05 280.89 379.24C284.21 378.43 287.54 377.57 290.87 376.66C294.20 375.75 297.52 374.79 300.85 373.79C304.18 372.79 307.51 371.74 310.83 370.65C314.16 369.56 317.49 368.42 320.82 367.25C324.14 366.08 327.47 364.87 330.80 363.63C334.13 362.39 337.45 361.11 340.78 359.81C344.11 358.50 347.44 357.17 350.76 355.81C354.09 354.46 357.42 353.08 360.75 351.68C364.07 350.29 367.40 348.87 370.73 347.46C374.06 346.04 377.38 344.60 380.71 343.17C384.04 341.74 387.37 340.30 390.69 338.88C394.02 337.45 397.35 336.03 400.68 334.62C404.00 333.22 407.33 331.82 410.66 330.46C413.99 329.09 417.31 327.74 420.64 326.43C423.97 325.12 427.30 323.83 430.62 322.59C433.95 321.34 437.28 320.13 440.61 318.97C443.94 317.80 447.26 316.67 450.59 315.59C453.92 314.52 457.25 313.48 460.57 312.50C463.90 311.52 467.23 310.58 470.56 309.70C473.88 308.81 477.21 307.98 480.54 307.20C483.87 306.42 487.19 305.69 490.52 305.01C493.85 304.33 497.18 303.71 500.50 303.13C503.83 302.55 507.16 302.03 510.49 301.55C513.81 301.07 517.14 300.64 520.47 300.26C523.80 299.88 527.12 299.54 530.45 299.25C533.78 298.95 537.11 298.71 540.43 298.50C543.76 298.29 547.09 298.13 550.42 298.01C553.74 297.89 557.07 297.81 560.40 297.77C563.73 297.72 567.05 297.72 570.38 297.76C573.71 297.79 577.04 297.87 580.36 297.98C583.69 298.09 587.02 298.24 590.35 298.42C593.67 298.61 597.00 298.83 600.33 299.08C603.66 299.33 606.98 299.62 610.31 299.94C613.64 300.26 616.97 300.62 620.30 301.01C623.62 301.40 626.95 301.82 630.28 302.27C633.61 302.72 636.93 303.21 640.26 303.72C643.59 304.24 646.92 304.78 650.24 305.36C653.57 305.94 656.90 306.55 660.23 307.18C663.55 307.82 666.88 308.49 670.21 309.19C673.54 309.89 676.86 310.62 680.19 311.37C683.52 312.13 686.85 312.92 690.17 313.74C693.50 314.55 696.83 315.40 700.16 316.27C703.48 317.15 706.81 318.06 710.14 318.99C713.47 319.92 716.79 320.89 720.12 321.88C723.45 322.88 726.78 323.90 730.10 324.95C733.43 326.01 736.76 327.09 740.09 328.20C743.41 329.32 746.74 330.46 750.07 331.63C753.40 332.81 756.72 334.01 760.05 335.25C763.38 336.49 766.71 337.76 770.03 339.06C773.36 340.36 776.69 341.69 780.02 343.05C783.34 344.42 788.34 346.55 790.00 347.25"/></g></svg><div class="hr"><i class="mj" style="left:20.90px"></i><i class="mn" style="left:25.40px"></i><i class="mn" style="left:29.89px"></i><i class="mn" style="left:34.39px"></i><b style="left:22.10px">0</b><i class="mj" style="left:38.88px"></i><i class="mn" style="left:43.38px"></i><i class="mn" style="left:47.88px"></i><i class="mn" style="left:52.37px"></i><b style="left:40.09px">200</b><i class="mj" style="left:56.87px"></i><i class="mn" style="left:61.37px"></i><i class="mn" style="left:65.86px"></i><i class="mn" style="left:70.36px"></i><b style="left:58.07px">400</b><i class="mj" style="left:74.85px"></i><i class="mn" style="left:79.35px"></i><i class="mn" style="left:83.85px"></i><i class="mn" style="left:88.34px"></i><b style="left:76.05px">600</b><i class="mj" style="left:92.84px"></i><i class="mn" style="left:97.34px"></i><i class="mn" style="left:101.83px"></i><i class="mn" style="left:106.33px"></i><b style="left:94.04px">800</b><i class="mj" style="left:110.82px"></i><i class="mn" style="left:115.32px"></i><i class="mn" style="left:119.82px"></i><i class="mn" style="left:124.31px"></i><b style="left:112.02px">1000</b><i class="mj" style="left:128.81px"></i><i class="mn" style="left:133.31px"></i><i class="mn" style="left:137.80px"></i><i class="mn" style="left:142.30px"></i><b style="left:130.01px">1200</b><i class="mj" style="left:146.79px"></i><i class="mn" style="left:151.29px"></i><i class="mn" style="left:155.79px"></i><i class="mn" style="left:160.28px"></i><b style="left:147.99px">1400</b><i class="mj" style="left:164.78px"></i><i class="mn" style="left:169.28px"></i><i class="mn" style="left:173.77px"></i><i class="mn" style="left:178.27px"></i><b style="left:165.98px">1600</b><i class="mj" style="left:182.77px"></i><i class="mn" style="left:187.26px"></i><i class="mn" style="left:191.76px"></i><i class="mn" style="left:196.25px"></i><b style="left:183.97px">1800</b><i class="mj" style="left:200.75px"></i><i class="mn" style="left:205.25px"></i><i class="mn" style="left:209.74px"></i><i class="mn" style="left:214.24px"></i><b style="left:201.95px">2000</b><i class="mj" style="left:218.73px"></i><i class="mn" style="left:223.23px"></i><i class="mn" style="left:227.73px"></i><i class="mn" style="left:232.22px"></i><b style="left:219.93px">2200</b><i class="mj" style="left:236.72px"></i><i class="mn" style="left:241.22px"></i><i class="mn" style="left:245.71px"></i><i class="mn" style="left:250.21px"></i><b style="left:237.92px">2400</b><i class="mj" style="left:254.71px"></i><i class="mn" style="left:259.20px"></i><i class="mn" style="left:263.70px"></i><i class="mn" style="left:268.19px"></i><b style="left:255.91px">2600</b><i class="mj" style="left:272.69px"></i><i class="mn" style="left:277.19px"></i><i class="mn" style="left:281.68px"></i><i class="mn" style="left:286.18px"></i><b style="left:273.89px">2800</b><i class="mj" style="left:290.67px"></i><i class="mn" style="left:295.17px"></i><i class="mn" style="left:299.67px"></i><i class="mn" style="left:304.16px"></i><b style="left:291.87px">3000</b><i class="mj" style="left:308.66px"></i><i class="mn" style="left:313.16px"></i><i class="mn" style="left:317.65px"></i><i class="mn" style="left:322.15px"></i><b style="left:309.86px">3200</b><i class="mj" style="left:326.64px"></i><i class="mn" style="left:331.14px"></i><i class="mn" style="left:335.64px"></i><i class="mn" style="left:340.13px"></i><b style="left:327.84px">3400</b><i class="mj" style="left:344.63px"></i><i class="mn" style="left:349.13px"></i><i class="mn" style="left:353.62px"></i><i class="mn" style="left:358.12px"></i><b style="left:345.83px">3600</b><i class="mj" style="left:362.61px"></i><i class="mn" style="left:367.11px"></i><i class="mn" style="left:371.61px"></i><i class="mn" style="left:376.10px"></i><b style="left:363.81px">3800</b><i class="mj" style="left:380.60px"></i><i class="mn" style="left:385.10px"></i><i class="mn" style="left:389.59px"></i><i class="mn" style="left:394.09px"></i><b style="left:381.80px">4000</b><i class="mj" style="left:398.58px"></i><i class="mn" style="left:403.08px"></i><i class="mn" style="left:407.58px"></i><i class="mn" style="left:412.07px"></i><b style="left:399.78px">4200</b><i class="mj" style="left:416.57px"></i><i class="mn" style="left:421.07px"></i><i class="mn" style="left:425.56px"></i><i class="mn" style="left:430.06px"></i><b style="left:417.77px">4400</b><i class="mj" style="left:434.55px"></i><i class="mn" style="left:439.05px"></i><i class="mn" style="left:443.55px"></i><i class="mn" style="left:448.04px"></i><b style="left:435.75px">4600</b><i class="mj" style="left:452.54px"></i><i class="mn" style="left:457.04px"></i><i class="mn" style="left:461.53px"></i><i class="mn" style="left:466.03px"></i><b style="left:453.74px">4800</b><i class="mj" style="left:470.52px"></i><i class="mn" style="left:475.02px"></i><i class="mn" style="left:479.52px"></i><i class="mn" style="left:484.01px"></i><b style="left:471.72px">5000</b><i class="mj" style="left:488.51px"></i><i class="mn" style="left:493.01px"></i><i class="mn" style="left:497.50px"></i><i class="mn" style="left:502.00px"></i><b style="left:489.71px">5200</b><i class="mj" style="left:506.49px"></i><i class="mn" style="left:510.99px"></i><i class="mn" style="left:515.49px"></i><i class="mn" style="left:519.98px"></i><b style="left:507.69px">5400</b><i class="mj" style="left:524.48px"></i><i class="mn" style="left:528.98px"></i><i class="mn" style="left:533.47px"></i><i class="mn" style="left:537.97px"></i><b style="left:525.68px">5600</b><i class="mj" style="left:542.46px"></i><i class="mn" style="left:546.96px"></i><i class="mn" style="left:551.46px"></i><i class="mn" style="left:555.95px"></i><b style="left:543.66px">5800</b><i class="mj" style="left:560.45px"></i><i class="mn" style="left:564.95px"></i><i class="mn" style="left:569.44px"></i><i class="mn" style="left:573.94px"></i><b style="left:561.65px">6000</b><i class="mj" style="left:578.43px"></i><i class="mn" style="left:582.93px"></i><i class="mn" style="left:587.43px"></i><i class="mn" style="left:591.92px"></i><b style="left:579.63px">6200</b><i class="mj" style="left:596.42px"></i><i class="mn" style="left:600.92px"></i><i class="mn" style="left:605.41px"></i><i class="mn" style="left:609.91px"></i><b style="left:597.62px">6400</b><i class="mj" style="left:614.40px"></i><i class="mn" style="left:618.90px"></i><i class="mn" style="left:623.40px"></i><i class="mn" style="left:627.89px"></i><b style="left:615.61px">6600</b><i class="mj" style="left:632.39px"></i><i class="mn" style="left:636.89px"></i><i class="mn" style="left:641.38px"></i><i class="mn" style="left:645.88px"></i><b style="left:633.59px">6800</b><i class="mj" style="left:650.38px"></i><i class="mn" style="left:654.87px"></i><i class="mn" style="left:659.37px"></i><i class="mn" style="left:663.86px"></i><b style="left:651.58px">7000</b><i class="mj" style="left:668.36px"></i><i class="mn" style="left:672.86px"></i><i class="mn" style="left:677.35px"></i><i class="mn" style="left:681.85px"></i><b style="left:669.56px">7200</b><i class="mj" style="left:686.34px"></i><i class="mn" style="left:690.84px"></i><i class="mn" style="left:695.34px"></i><i class="mn" style="left:699.83px"></i><b style="left:687.54px">7400</b><i class="mj" style="left:704.33px"></i><i class="mn" style="left:708.83px"></i><i class="mn" style="left:713.32px"></i><i class="mn" style="left:717.82px"></i><b style="left:705.53px">7600</b><i class="mj" style="left:722.31px"></i><i class="mn" style="left:726.81px"></i><i class="mn" style="left:731.31px"></i><i class="mn" style="left:735.80px"></i><b style="left:723.51px">7800</b><i class="mj" style="left:740.30px"></i><i class="mn" style="left:744.80px"></i><i class="mn" style="left:749.29px"></i><i class="mn" style="left:753.79px"></i><b style="left:741.50px">8000</b><i class="mj" style="left:758.28px"></i><i class="mn" style="left:762.78px"></i><i class="mn" style="left:767.28px"></i><i class="mn" style="left:771.77px"></i><b style="left:759.49px">8200</b><i class="mj" style="left:776.27px"></i><i class="mn" style="left:780.77px"></i><i class="mn" style="left:785.26px"></i><i class="mn" style="left:789.76px"></i><b style="left:777.47px">8400</b><i class="mj" style="left:794.25px"></i><i class="mn" style="left:798.75px"></i><i class="mn" style="left:803.25px"></i><i class="mn" style="left:807.74px"></i><b style="left:795.46px">8600</b><i class="mj" style="left:812.24px"></i><i class="mn" style="left:816.74px"></i><i class="mn" style="left:821.23px"></i><i class="mn" style="left:825.73px"></i><b style="left:813.44px">8800</b><i class="mj" style="left:830.22px"></i><i class="mn" style="left:834.72px"></i><i class="mn" style="left:839.22px"></i><i class="mn" style="left:843.71px"></i><b style="left:831.42px">9000</b><i class="mj" style="left:848.21px"></i><i class="mn" style="left:852.71px"></i><i class="mn" style="left:857.20px"></i><i class="mn" style="left:861.70px"></i><b style="left:849.41px">9200</b><i class="mj" style="left:866.19px"></i><i class="mn" style="left:870.69px"></i><i class="mn" style="left:875.19px"></i><i class="mn" style="left:879.68px"></i><b style="left:867.39px">9400</b><i class="mj" style="left:884.18px"></i><i class="mn" style="left:888.68px"></i><i class="mn" style="left:893.17px"></i><i class="mn" style="left:897.67px"></i><b style="left:885.38px">9600</b><i class="mj" style="left:902.16px"></i><i class="mn" style="left:906.66px"></i><i class="mn" style="left:911.16px"></i><i class="mn" style="left:915.65px"></i><b style="left:903.37px">9800</b><i class="mj" style="left:920.15px"></i><i class="mn" style="left:924.65px"></i><i class="mn" style="left:929.14px"></i><i class="mn" style="left:933.64px"></i><b style="left:921.35px">10000</b><i class="mj" style="left:938.13px"></i><i class="mn" style="left:942.63px"></i><i class="mn" style="left:947.13px"></i><i class="mn" style="left:951.62px"></i><b style="left:939.34px">10200</b><i class="mj" style="left:956.12px"></i><i class="mn" style="left:960.62px"></i><i class="mn" style="left:965.11px"></i><i class="mn" style="left:969.61px"></i><b style="left:957.32px">10400</b><i class="mj" style="left:974.10px"></i><i class="mn" style="left:978.60px"></i><i class="mn" style="left:983.10px"></i><i class="mn" style="left:987.59px"></i><b style="left:975.30px">10600</b><i class="mj" style="left:992.09px"></i><i class="mn" style="left:996.59px"></i><i class="mn" style="left:1001.08px"></i><i class="mn" style="left:1005.58px"></i><b style="left:993.29px">10800</b><i class="mj" style="left:1010.07px"></i><i class="mn" style="left:1014.57px"></i><i class="mn" style="left:1019.07px"></i><i class="mn" style="left:1023.56px"></i><b style="left:1011.27px">11000</b><i class="mj" style="left:1028.06px"></i><i class="mn" style="left:1032.56px"></i><i class="mn" style="left:1037.05px"></i><i class="mn" style="left:1041.55px"></i><b style="left:1029.26px">11200</b></div><div class="vr"><i class="mj" style="top:70.75px"></i><i class="mn" style="top:75.24px"></i><i class="mn" style="top:79.73px"></i><i class="mn" style="top:84.21px"></i><b style="top:71.50px">1</b><b style="top:77.05px">4</b><b style="top:82.60px">0</b><i class="mj" style="top:88.70px"></i><i class="mn" style="top:93.19px"></i><i class="mn" style="top:97.68px"></i><i class="mn" style="top:102.16px"></i><b style="top:89.45px">1</b><b style="top:95.00px">6</b><b style="top:100.55px">0</b><i class="mj" style="top:106.65px"></i><i class="mn" style="top:111.14px"></i><i class="mn" style="top:115.63px"></i><i class="mn" style="top:120.11px"></i><b style="top:107.40px">1</b><b style="top:112.95px">8</b><b style="top:118.50px">0</b><i class="mj" style="top:124.60px"></i><i class="mn" style="top:129.09px"></i><i class="mn" style="top:133.58px"></i><i class="mn" style="top:138.06px"></i><b style="top:125.35px">2</b><b style="top:130.90px">0</b><b style="top:136.45px">0</b><i class="mj" style="top:142.55px"></i><i class="mn" style="top:147.04px"></i><i class="mn" style="top:151.53px"></i><i class="mn" style="top:156.01px"></i><b style="top:143.30px">2</b><b style="top:148.85px">2</b><b style="top:154.40px">0</b><i class="mj" style="top:160.50px"></i><i class="mn" style="top:164.99px"></i><i class="mn" style="top:169.48px"></i><i class="mn" style="top:173.96px"></i><b style="top:161.25px">2</b><b style="top:166.80px">4</b><b style="top:172.35px">0</b><i class="mj" style="top:178.45px"></i><i class="mn" style="top:182.94px"></i><i class="mn" style="top:187.43px"></i><i class="mn" style="top:191.91px"></i><b style="top:179.20px">2</b><b style="top:184.75px">6</b><b style="top:190.30px">0</b><i class="mj" style="top:196.40px"></i><i class="mn" style="top:200.89px"></i><i class="mn" style="top:205.38px"></i><i class="mn" style="top:209.86px"></i><b style="top:197.15px">2</b><b style="top:202.70px">8</b><b style="top:208.25px">0</b><i class="mj" style="top:214.35px"></i><i class="mn" style="top:218.84px"></i><i class="mn" style="top:223.33px"></i><i class="mn" style="top:227.81px"></i><b style="top:215.10px">3</b><b style="top:220.65px">0</b><b style="top:226.20px">0</b><i class="mj" style="top:232.30px"></i><i class="mn" style="top:236.79px"></i><i class="mn" style="top:241.28px"></i><i class="mn" style="top:245.76px"></i><b style="top:233.05px">3</b><b style="top:238.60px">2</b><b style="top:244.15px">0</b><i class="mj" style="top:250.25px"></i><i class="mn" style="top:254.74px"></i><i class="mn" style="top:259.23px"></i><i class="mn" style="top:263.71px"></i><b style="top:251.00px">3</b><b style="top:256.55px">4</b><b style="top:262.10px">0</b><i class="mj" style="top:268.20px"></i><i class="mn" style="top:272.69px"></i><i class="mn" style="top:277.18px"></i><i class="mn" style="top:281.66px"></i><b style="top:268.95px">3</b><b style="top:274.50px">6</b><b style="top:280.05px">0</b><i class="mj" style="top:286.15px"></i><i class="mn" style="top:290.64px"></i><i class="mn" style="top:295.13px"></i><i class="mn" style="top:299.61px"></i><b style="top:286.90px">3</b><b style="top:292.45px">8</b><b style="top:298.00px">0</b><i class="mj" style="top:304.10px"></i><i class="mn" style="top:308.59px"></i><i class="mn" style="top:313.08px"></i><i class="mn" style="top:317.56px"></i><b style="top:304.85px">4</b><b style="top:310.40px">0</b><b style="top:315.95px">0</b><i class="mj" style="top:322.05px"></i><i class="mn" style="top:326.54px"></i><i class="mn" style="top:331.03px"></i><i class="mn" style="top:335.51px"></i><b style="top:322.80px">4</b><b style="top:328.35px">2</b><b style="top:333.90px">0</b><i class="mj" style="top:340.00px"></i><i class="mn" style="top:344.49px"></i><i class="mn" style="top:348.98px"></i><i class="mn" style="top:353.46px"></i><b style="top:340.75px">4</b><b style="top:346.30px">4</b><b style="top:351.85px">0</b><i class="mj" style="top:357.95px"></i><i class="mn" style="top:362.44px"></i><i class="mn" style="top:366.93px"></i><i class="mn" style="top:371.41px"></i><b style="top:358.70px">4</b><b style="top:364.25px">6</b><b style="top:369.80px">0</b><i class="mj" style="top:375.90px"></i><i class="mn" style="top:380.39px"></i><i class="mn" style="top:384.88px"></i><i class="mn" style="top:389.36px"></i><b style="top:376.65px">4</b><b style="top:382.20px">8</b><b style="top:387.75px">0</b><i class="mj" style="top:393.85px"></i><i class="mn" style="top:398.34px"></i><i class="mn" style="top:402.83px"></i><i class="mn" style="top:407.31px"></i><b style="top:394.60px">5</b><b style="top:400.15px">0</b><b style="top:405.70px">0</b><i class="mj" style="top:411.80px"></i><i class="mn" style="top:416.29px"></i><i class="mn" style="top:420.78px"></i><i class="mn" style="top:425.26px"></i><b style="top:412.55px">5</b><b style="top:418.10px">2</b><b style="top:423.65px">0</b><i class="mj" style="top:429.75px"></i><i class="mn" style="top:434.24px"></i><i class="mn" style="top:438.73px"></i><i class="mn" style="top:443.21px"></i><b style="top:430.50px">5</b><b style="top:436.05px">4</b><b style="top:441.60px">0</b><i class="mj" style="top:447.70px"></i><i class="mn" style="top:452.19px"></i><i class="mn" style="top:456.68px"></i><i class="mn" style="top:461.16px"></i><b style="top:448.45px">5</b><b style="top:454.00px">6</b><b style="top:459.55px">0</b><i class="mj" style="top:465.65px"></i><i class="mn" style="top:470.14px"></i><i class="mn" style="top:474.62px"></i><i class="mn" style="top:479.11px"></i><b style="top:466.40px">5</b><b style="top:471.95px">8</b><b style="top:477.50px">0</b><i class="mj" style="top:483.60px"></i><i class="mn" style="top:488.09px"></i><i class="mn" style="top:492.58px"></i><i class="mn" style="top:497.06px"></i><b style="top:484.35px">6</b><b style="top:489.90px">0</b><b style="top:495.45px">0</b><i class="mj" style="top:501.55px"></i><i class="mn" style="top:506.04px"></i><i class="mn" style="top:510.53px"></i><i class="mn" style="top:515.01px"></i><b style="top:502.30px">6</b><b style="top:507.85px">2</b><b style="top:513.40px">0</b><i class="mj" style="top:519.50px"></i><i class="mn" style="top:523.99px"></i><i class="mn" style="top:528.48px"></i><i class="mn" style="top:532.96px"></i><b style="top:520.25px">6</b><b style="top:525.80px">4</b><b style="top:531.35px">0</b></div><div class="status" style="left:21.1px;width:27.7px"><span id="m22" class="t " style="left:4.30px;top:2.9px;transform:scaleX(0.8379);transform-origin:0 50%;">25.00%</span></div><div class="status" style="left:49.8px;width:45.3px"><span id="m23" class="t " style="left:3.30px;top:2.9px;transform:scaleX(0.8890);transform-origin:0 50%;">9000 × 6000</span></div><svg style="left:0;top:54px" width="21" height="464" viewBox="0 54 21 464"><path d="M0 109.00H17Q19 109.00 19 111.00V124.00Q19 126.00 17 126.00H0Z" fill="#585858"/><rect x="0" y="109" width="1.15" height="17" fill="#4a7be0"/><path d="M19.2 68.30V71.20H16.3Q18.4 70.60 19.2 68.30Z" fill="#b4b4b4"/><path d="M19.2 86.08V88.98H16.3Q18.4 88.38 19.2 86.08Z" fill="#b4b4b4"/><path d="M19.2 103.86V106.76H16.3Q18.4 106.16 19.2 103.86Z" fill="#b4b4b4"/><path d="M19.2 121.64V124.54H16.3Q18.4 123.94 19.2 121.64Z" fill="#b4b4b4"/><path d="M19.2 139.42V142.32H16.3Q18.4 141.72 19.2 139.42Z" fill="#b4b4b4"/><path d="M19.2 157.20V160.10H16.3Q18.4 159.50 19.2 157.20Z" fill="#b4b4b4"/><path d="M19.2 174.98V177.88H16.3Q18.4 177.28 19.2 174.98Z" fill="#b4b4b4"/><path d="M19.2 192.76V195.66H16.3Q18.4 195.06 19.2 192.76Z" fill="#b4b4b4"/><path d="M19.2 228.32V231.22H16.3Q18.4 230.62 19.2 228.32Z" fill="#b4b4b4"/><path d="M19.2 246.10V249.00H16.3Q18.4 248.40 19.2 246.10Z" fill="#b4b4b4"/><path d="M19.2 263.88V266.78H16.3Q18.4 266.18 19.2 263.88Z" fill="#b4b4b4"/><path d="M19.2 281.66V284.56H16.3Q18.4 283.96 19.2 281.66Z" fill="#b4b4b4"/><path d="M19.2 299.44V302.34H16.3Q18.4 301.74 19.2 299.44Z" fill="#b4b4b4"/><path d="M19.2 317.22V320.12H16.3Q18.4 319.52 19.2 317.22Z" fill="#b4b4b4"/><path d="M19.2 335.00V337.90H16.3Q18.4 337.30 19.2 335.00Z" fill="#b4b4b4"/><path d="M19.2 352.78V355.68H16.3Q18.4 355.08 19.2 352.78Z" fill="#b4b4b4"/><path d="M19.2 370.56V373.46H16.3Q18.4 372.86 19.2 370.56Z" fill="#b4b4b4"/><path d="M4.7 58.80V67.90L6.9 65.90L8.5 69.40L9.9 68.80L8.4 65.40H11.5Z" fill="#d2d2d2"/><path d="M11.3 67.60H15.6M13.45 65.50V69.70" stroke="#d2d2d2" stroke-width="0.95"/><rect x="4.5" y="77.28" width="11.2" height="9.4" fill="none" stroke="#d2d2d2" stroke-width="1" stroke-dasharray="2.4 1.5" stroke-dashoffset="1.2"/><ellipse cx="10" cy="98.76" rx="5.7" ry="3.7" fill="none" stroke="#d2d2d2" stroke-width="0.8"/><path d="M8.2 99.86Q6.2 100.66 7.3 102.26L8.9 105.26" fill="none" stroke="#d2d2d2" stroke-width="0.9"/><path d="M12.22 116.51L9.64 116.58L10.55 118.99L8.69 117.21L7.63 119.56L7.56 116.98L5.15 117.89L6.93 116.03L4.58 114.97L7.16 114.90L6.25 112.49L8.11 114.27L9.17 111.92L9.24 114.50L11.65 113.59L9.87 115.45Z" fill="#e2e2e2"/><circle cx="8.4" cy="115.74" r="1.9" fill="#e8e8e8"/><path d="M9.8 117.14L15.7 123.04" stroke="#dcdcdc" stroke-width="1"/><path d="M7 129.82V138.42H15.8M4.1 132.72H13.4V140.82" fill="none" stroke="#d2d2d2" stroke-width="1.25"/><path d="M4.4 158.30L5.2 156.10L10.6 150.70L12.4 152.50L7 157.90Z" fill="none" stroke="#d2d2d2" stroke-width="0.75"/><path d="M9.8 149.80L13.4 153.40L14.3 152.50L13.3 151.50L15.5 149.30Q16.3 148.00 15.4 147.20T13.3 147.30L11.4 149.30L10.9 148.70Z" fill="#dadada"/><g transform="rotate(40 10 172.08)"><rect x="3.7" y="169.38" width="12.6" height="5.4" rx="1.2" fill="none" stroke="#d2d2d2" stroke-width="0.8"/><rect x="8.1" y="169.38" width="3.8" height="5.4" fill="#a8a8a8"/></g><path d="M15.50 167.58L14.02 168.00L13.60 169.48L13.18 168.00L11.70 167.58L13.18 167.16L13.60 165.68L14.02 167.16Z" fill="#e0e0e0"/><path d="M13 183.16L16 185.56L13.4 189.06L11 186.96Z" fill="#dcdcdc"/><path d="M10.4 187.56L12.8 189.66Q12.4 192.96 9.4 194.26Q6.6 195.16 5 194.86Q6.6 193.36 7 190.96Q7.6 188.56 10.4 187.56Z" fill="#d2d2d2"/><path d="M7.4 202.94Q7.4 201.04 10 201.04Q12.6 201.04 12.6 202.94Q12.6 205.34 11.3 206.34V208.04H15.2V210.84H4.8V208.04H8.7V206.34Q7.4 205.34 7.4 202.94Z" fill="#d2d2d2"/><path d="M5 211.94H15" stroke="#a8a8a8" stroke-width="0.7"/><g transform="rotate(-45 10 224.32)"><rect x="3.8" y="221.02" width="12.4" height="6.6" rx="3.3" fill="none" stroke="#d2d2d2" stroke-width="0.8"/><path d="M10 221.02H12.9A3.3 3.3 0 0 1 12.9 227.62H10Q8.8 224.32 10 221.02Z" fill="#dedede"/></g><defs><linearGradient id="gr" x1="0" x2="1" y1="0" y2="0"><stop offset="0" stop-color="#c6c6c6"/><stop offset="1" stop-color="#4c4c4c"/></linearGradient></defs><rect x="4" y="238.10" width="11.4" height="8.6" fill="url(#gr)"/><path d="M10 254.48Q13.9 258.88 13.9 262.08A3.9 3.9 0 0 1 6.1 262.08Q6.1 258.88 10 254.48Z" fill="#d2d2d2"/><circle cx="12.1" cy="275.96" r="3.9" fill="#cfcfcf"/><path d="M9.2 279.06L4.6 283.46" stroke="#d2d2d2" stroke-width="1"/><path d="M4.8 290.24H15.6V292.84H15Q14.8 291.24 13.6 291.04H11.2V299.24Q11.2 300.14 12.8 300.24V300.84H7.4V300.24Q9 300.14 9 299.24V291.04H6.8Q5.6 291.24 5.4 292.84H4.8Z" fill="#d2d2d2"/><path d="M12.6 307.22L16 310.62L14.2 312.42L11.4 309.62Z" fill="#dcdcdc"/><path d="M10.6 310.22L13 313.02L11.4 316.62L4.4 319.02L7.2 312.02Z" fill="#d2d2d2"/><circle cx="8.9" cy="314.42" r="0.9" fill="#555"/><path d="M5 325.80V333.80L7 332.10L8.5 335.40L9.6 334.90L8.2 331.70H10.6Z" fill="none" stroke="#c8c8c8" stroke-width="0.7"/><path d="M11.4 328.40L14.8 333.80M12.4 331.60L13.6 329.20" stroke="#bcbcbc" stroke-width="0.7"/><circle cx="11.5" cy="328.40" r="0.8" fill="#d8d8d8"/><circle cx="12.6" cy="331.40" r="0.8" fill="#d8d8d8"/><circle cx="13" cy="334.50" r="0.8" fill="#d8d8d8"/><circle cx="5.2" cy="326.00" r="0.7" fill="#d8d8d8"/><rect x="4.1" y="344.88" width="12" height="8.3" rx="0.6" fill="#cbcbcb"/><path d="M7.9 362.76Q7.9 361.96 8.7 361.96T9.6 362.76V361.76Q9.7 360.96 10.6 360.96T11.4 361.76V362.36Q11.5 361.66 12.3 361.66T13 362.56V363.96Q13.6 363.56 13.9 364.36V369.36Q13.9 372.36 11.4 372.36H10.4Q8.6 372.36 7.4 370.36L4.9 367.16Q5.6 366.16 6.6 367.16L7.9 368.36Z" fill="#d2d2d2"/><circle cx="8" cy="382.94" r="3.4" fill="none" stroke="#d2d2d2" stroke-width="1.15"/><path d="M10.7 385.74L14.9 389.94" stroke="#d2d2d2" stroke-width="1.9" stroke-linecap="round"/><rect x="8" y="404" width="11" height="11" rx="1.6" fill="#000"/><rect x="0.8" y="396.3" width="11" height="11.4" rx="1.6" fill="#000" stroke="#3a3a3a" stroke-width="0.35"/><rect x="12.9" y="396.9" width="3.3" height="3.3" fill="#000"/><rect x="15.3" y="399.4" width="3.9" height="4.2" fill="#fff"/><path d="M2.2 411.2V409H5M5 413.6H6.6V411" fill="none" stroke="#a8a8a8" stroke-width="0.7"/><path d="M1.2 410.2L2.2 408.6L3.2 410.2ZM5.6 412.4L6.6 414L7.6 412.4Z" fill="#c0c0c0"/><rect x="4" y="419.8" width="12.1" height="8.5" fill="#cdcdcd"/><circle cx="10" cy="424.05" r="2.6" fill="#4e4e4e"/><rect x="4" y="434.6" width="12.1" height="6.8" rx="0.9" fill="#d6d6d6"/><path d="M5.4 436.6H14.8" stroke="#6a6a6a" stroke-width="1.1" stroke-dasharray="0.7 0.55"/><path d="M5.8 438.1H14.4" stroke="#7a7a7a" stroke-width="0.8" stroke-dasharray="0.7 0.55"/><path d="M8 439.6H12.2" stroke="#555" stroke-width="0.8"/></svg><div class="dlg"><div class="hd"><span id="m24" class="t " style="left:4.60px;top:5.6px;font-size:7.7px;font-weight:bold;color:#fff;transform:scaleX(1.1310);transform-origin:0 50%;">色相/彩度</span><svg style="left:246.2px;top:6px" width="7" height="7" viewBox="0 0 7 7"><path d="M0.7 0.7L5.8 5.8M5.8 0.7L0.7 5.8" stroke="#f4f4f4" stroke-width="1.05"/></svg></div><svg style="left:9.30px;top:30.80px" width="9" height="6" viewBox="0 0 9 6"><path d="M1 3H8M2.6 1.2L0.8 3L2.6 4.8M6.4 1.2L8.2 3L6.4 4.8" fill="none" stroke="#d8d8d8" stroke-width="0.7"/></svg><span id="m25" class="t lab" style="left:23.50px;top:31.40px;">距離:</span><div class="inp" style="left:54.10px;top:26.40px;width:45.7px;height:14.7px;border-radius:2px"><span id="m26" class="t " style="left:4.40px;top:5.1px;font-size:7.1px;color:#e6e6e6;transform:scaleX(1.0790);transform-origin:0 50%;">Master</span><svg style="left:37.6px;top:5.2px" width="6" height="5" viewBox="0 0 6 5"><path d="M0.6 1L2.9 3.4L5.2 1" fill="none" stroke="#e0e0e0" stroke-width="0.9"/></svg></div><span id="m27" class="t lab" style="left:7.50px;top:48.50px;">色相:</span><div class="num" style="top:43.50px"><span id="m28" class="t " style="left:42.20px;top:5px;font-size:7.1px;color:#e6e6e6;transform:scaleX(0.9625);transform-origin:0 50%;">151</span></div><div class="trk" style="top:63.05px"><i style="width:153.07px"></i></div><div class="knob" style="left:156.77px;top:61.10px"></div><span id="m29" class="t lab" style="left:7.50px;top:82.80px;">彩度:</span><div class="num" style="top:77.50px"><span id="m30" class="t " style="left:49.70px;top:5px;font-size:7.1px;color:#e6e6e6;transform:scaleX(0.9866);transform-origin:0 50%;">0</span></div><div class="trk" style="top:96.65px"><i style="width:85.20px"></i></div><div class="knob" style="left:88.90px;top:94.70px"></div><span id="m31" class="t lab" style="left:7.50px;top:116.90px;">明るさ:</span><div class="num" style="top:111.50px"><span id="m32" class="t " style="left:49.70px;top:5px;font-size:7.1px;color:#e6e6e6;transform:scaleX(0.9866);transform-origin:0 50%;">0</span></div><div class="trk" style="top:130.95px"><i style="width:85.20px"></i></div><div class="knob" style="left:88.90px;top:129.00px"></div><div class="btn" style="left:191.7px;top:26.80px;width:58.9px;height:13.7px"><span id="m33" class="t " style="left:24.25px;top:4.7px;font-size:7.1px;color:#eaeaea;transform:scaleX(0.9854);transform-origin:0 50%;">OK</span></div><div class="btn" style="left:191.7px;top:43.60px;width:58.9px;height:14.6px"><span id="m34" class="t " style="left:0.00px;width:58.9px;text-align:center;top:4.8px;font-size:7.1px;color:#eaeaea;">リセット</span></div><div class="cb on" style="left:194.80px;top:65.00px;width:6.80px;height:6.80px"><svg style="left:0;top:0" width="6.80" height="6.80" viewBox="0 0 10 10"><path d="M2.2 5.2L4.2 7.2L7.9 2.9" fill="none" stroke="#fff" stroke-width="1.5"/></svg></div><span id="m35" class="t lab" style="left:204.50px;top:65.80px;">プレヴュー</span><div class="cb off" style="left:10.80px;top:150.20px;width:6.40px;height:6.40px"></div><span id="m36" class="t lab" style="left:19.80px;top:150.40px;color:#ececec;">着色</span><span id="m37" class="t lab" style="left:65.40px;top:150.80px;color:#8c8c8c;transform:scaleX(1.0508);transform-origin:0 50%;">Sample Hue:</span><svg style="left:110.40px;top:147.00px" width="13" height="13" viewBox="0 0 13 13"><path d="M1 12L1.6 10L7.2 4.4L8.8 6L3.2 11.6Z" fill="none" stroke="#9a9a9a" stroke-width="0.7"/><path d="M6.6 3.2L9.9 6.5L10.6 5.8L9.6 4.8L11.6 2.8Q12.2 1.8 11.4 1T9.6 0.8L7.6 2.8L7.3 2.5Z" fill="#9a9a9a"/></svg><span id="m38" class="t lab" style="left:129.80px;top:150.40px;color:#8c8c8c;">+</span><span id="m39" class="t lab" style="left:143.00px;top:149.70px;color:#8c8c8c;">-</span></div></div></body></html>
